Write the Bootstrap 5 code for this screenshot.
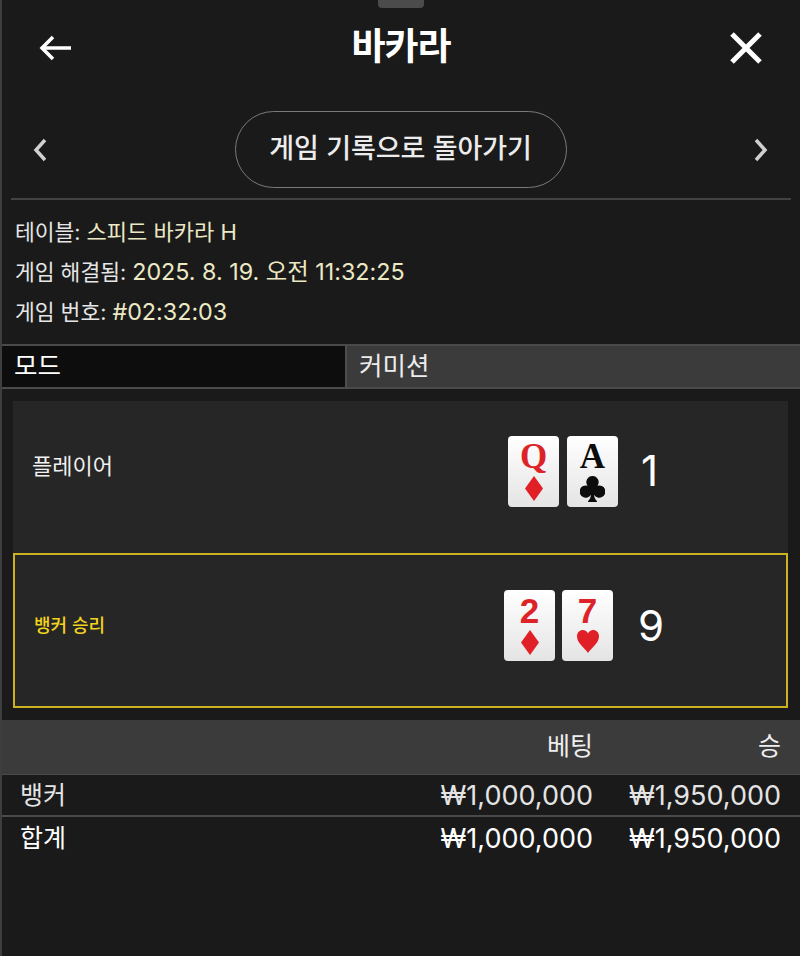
<!DOCTYPE html>
<html lang="ko">
<head>
<meta charset="utf-8">
<title>바카라</title>
<link href="https://cdn.jsdelivr.net/npm/bootstrap@5.3.0/dist/css/bootstrap.min.css" rel="stylesheet">
<style>
html,body{background:#1a1a1a;margin:0;overflow:hidden}
body{font-family:"Inter","Noto Sans CJK KR","Liberation Sans",sans-serif;color:#e8e8e8}
.shell{position:relative;height:956px;width:800px;background:#1a1a1a;border-left:2px solid #3e3e3e;overflow:hidden}
.grab{position:absolute;left:376px;top:-4px;width:46px;height:12px;background:#4b4b4b;border-radius:4px}
.topbar{height:96px;padding:0 38px 0 36px}
.topbar h1{font-family:"Noto Sans CJK KR",sans-serif;font-size:37px;font-weight:700;line-height:1;color:#fff;margin:-8px 0 0;letter-spacing:-1px}
.navrow{height:77px;margin-top:15px;padding:0 31px 0 30px}
.backpill{width:332px;height:77px;border:1.5px solid #7a7a7a;border-radius:39px;background:transparent;color:#ececec;font-family:"Noto Sans CJK KR",sans-serif;font-size:27px;font-weight:500;letter-spacing:-.1px;padding:0 0 4px}
.rulebar{height:2px;background:#424242;margin:10px 9px 0 9px}
.infoblock{padding:13px 13px 0;height:144px;font-size:21.500px;line-height:39px;color:#e6e6e6}
.infoblock span{color:#ece8c4;font-size:22px}
.infoblock span.numtext{font-size:23.300px}
.tabsrow{height:45px;border-top:2px solid #4a4a4a;border-bottom:2px solid #4a4a4a;font-size:25.500px;line-height:40px}
.tab-on{width:343px;background:#0d0d0d;color:#fff;padding-left:12px}
.tab-off{flex:1;background:#3b3b3b;border-left:2px solid #4d4d4d;color:#ececec;padding-left:12px}
.panel{margin:12px 12px 0 11px;background:#262626;height:307px}
.handrow{height:152px;padding:0 0 0 19px;font-size:22px;color:#f0f0f0}
.handwin{height:155px;border:2px solid #cdb21f;padding-left:19px;color:#f2d21e;font-size:18px;font-weight:500}
.handlabel{flex:1;margin-top:-22px}
.handwin .handlabel{margin-top:-10px}
.cardset{gap:8px}
.h2wrap .cardset{gap:7px}
.pcard{width:51px;height:71px;border-radius:4px;background:linear-gradient(#fff,#e4e4e4);display:flex;flex-direction:column;align-items:center;justify-content:flex-start;overflow:hidden}
.pcard b{display:block;font-size:35px;line-height:1;height:33px;margin-top:3px}
.pcard svg{display:block;margin-top:4px}
.f-serif{font-family:"Liberation Serif",serif}
.f-sans{font-family:"Liberation Sans",sans-serif}
.redc{color:#dc2327}
.blkc{color:#0c0c0c}
.score{font-size:42px;line-height:1;color:#fff;font-weight:400}
.h1wrap{margin-right:121px;margin-top:-12px}
.h1wrap .score{width:26px;margin-left:23px;text-align:left}
.h2wrap{margin-right:122px;margin-top:-10px}
.h2wrap .score{width:26px;margin-left:25px}
.betgrid{margin-top:12px;font-size:25px;color:#eee}
.betrow{display:flex;align-items:center;padding:0 19px 0 18px}
.bethead{height:55px;background:#3b3b3b;border-bottom:1px solid #4a4a4a}
.betline{height:42px;color:#e4e4e4;padding-top:2px}
.betsep{border-bottom:2px solid #4a4a4a}
.betname{flex:1}
.betval{width:188px;text-align:right;font-size:27px}
.bethead .betval{font-size:25px}
.betlast{color:#fff}
</style>
</head>
<body>
<div class="shell">
  <div class="grab"></div>
  <div class="topbar d-flex align-items-center justify-content-between">
    <svg width="34" height="26" viewBox="0 0 34 26" fill="none" stroke="#fff" stroke-width="3.500"><path d="M15 2 4 13l11 11M4 13h29"/></svg>
    <h1>바카라</h1>
    <svg width="32" height="32" viewBox="0 0 32 32" fill="none" stroke="#fff" stroke-width="5"><path d="M2 2l28 28M30 2 2 30"/></svg>
  </div>
  <div class="navrow d-flex align-items-center justify-content-between">
    <svg width="16" height="24" viewBox="0 0 16 24" fill="none" stroke="#d0d0d0" stroke-width="3.500"><path d="M13 2 4 12l9 10"/></svg>
    <button type="button" class="btn backpill">게임 기록으로 돌아가기</button>
    <svg width="16" height="24" viewBox="0 0 16 24" fill="none" stroke="#d0d0d0" stroke-width="3.500"><path d="M3 2l9 10-9 10"/></svg>
  </div>
  <div class="rulebar"></div>
  <div class="infoblock">
    <div>테이블: <span>스피드 바카라 H</span></div>
    <div>게임 해결됨: <span class="numtext">2025. 8. 19. 오전 11:32:25</span></div>
    <div>게임 번호: <span class="numtext">#02:32:03</span></div>
  </div>
  <div class="tabsrow d-flex">
    <div class="tab-on">모드</div>
    <div class="tab-off">커미션</div>
  </div>
  <div class="panel">
    <div class="handrow d-flex align-items-center">
      <div class="handlabel">플레이어</div>
      <div class="d-flex align-items-center h1wrap">
        <div class="d-flex cardset">
          <div class="pcard"><b class="f-serif redc">Q</b><svg width="18" height="25" viewBox="0 0 20 26" preserveAspectRatio="none"><path fill="#e01f26" d="M10 0 20 13 10 26 0 13z"/></svg></div>
          <div class="pcard"><b class="f-serif blkc">A</b><svg width="25" height="26" viewBox="0 0 26 27"><path fill="#0c0c0c" d="M13 0a6.400 6.400 0 0 1 5.200 10.100A6.400 6.400 0 1 1 14.600 19.600c.2 2.700 1.200 4.900 3 6.400v1H8.400v-1c1.800-1.500 2.800-3.700 3-6.400A6.400 6.400 0 1 1 7.800 10.100 6.400 6.400 0 0 1 13 0z"/></svg></div>
        </div>
        <div class="score">1</div>
      </div>
    </div>
    <div class="handwin d-flex align-items-center">
      <div class="handlabel">뱅커 승리</div>
      <div class="d-flex align-items-center h2wrap">
        <div class="d-flex cardset">
          <div class="pcard"><b class="f-sans redc">2</b><svg width="18" height="25" viewBox="0 0 20 26" preserveAspectRatio="none"><path fill="#e01f26" d="M10 0 20 13 10 26 0 13z"/></svg></div>
          <div class="pcard"><b class="f-sans redc">7</b><svg width="22" height="23" viewBox="0 0 23 24" preserveAspectRatio="none"><path fill="#e01f26" d="M11.500 24C8 18.500 0 14 0 6.500 0 2.500 3 0 6 0c2.500 0 4.500 1.300 5.500 3.700C12.500 1.300 14.500 0 17 0c3 0 6 2.500 6 6.500 0 7.500-8 12-11.500 17.500z"/></svg></div>
        </div>
        <div class="score">9</div>
      </div>
    </div>
  </div>
  <div class="betgrid">
    <div class="betrow bethead"><div class="betname"></div><div class="betval">베팅</div><div class="betval">승</div></div>
    <div class="betrow betline betsep"><div class="betname">뱅커</div><div class="betval">₩1,000,000</div><div class="betval">₩1,950,000</div></div>
    <div class="betrow betline betlast"><div class="betname">합계</div><div class="betval">₩1,000,000</div><div class="betval">₩1,950,000</div></div>
  </div>
</div>
<script src="https://cdn.jsdelivr.net/npm/bootstrap@5.3.0/dist/js/bootstrap.bundle.min.js"></script>
</body>
</html>
